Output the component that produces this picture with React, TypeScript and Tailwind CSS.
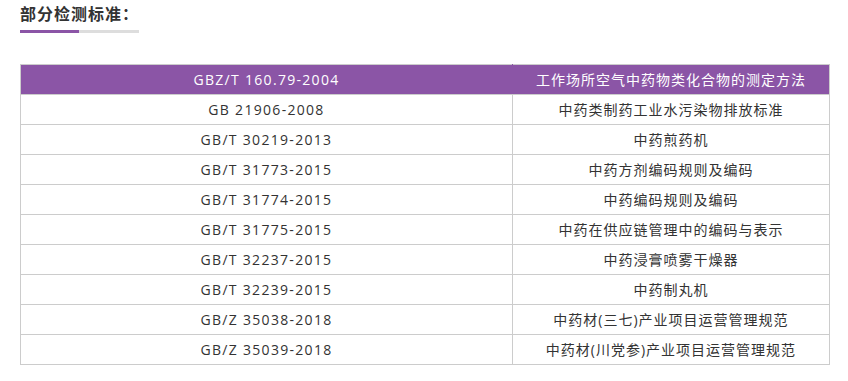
import React from "react";

const rows: [string, string][] = [
  ["GB 21906-2008", "中药类制药工业水污染物排放标准"],
  ["GB/T 30219-2013", "中药煎药机"],
  ["GB/T 31773-2015", "中药方剂编码规则及编码"],
  ["GB/T 31774-2015", "中药编码规则及编码"],
  ["GB/T 31775-2015", "中药在供应链管理中的编码与表示"],
  ["GB/T 32237-2015", "中药浸膏喷雾干燥器"],
  ["GB/T 32239-2015", "中药制丸机"],
  ["GB/Z 35038-2018", "中药材(三七)产业项目运营管理规范"],
  ["GB/Z 35039-2018", "中药材(川党参)产业项目运营管理规范"],
];

export default function App() {
  return (
    <div
      className="w-[848px] h-[381px] bg-white pl-5 pt-[3px]"
      style={{ fontFamily: '"Open Sans", "Noto Sans CJK SC", sans-serif' }}
    >
      <div className="text-[16px] leading-[22px] font-bold tracking-[1px] text-[#333]">部分检测标准：</div>
      <div className="flex mt-[5px] h-[3px] w-[119px]">
        <div className="w-[59px] bg-[#8b55a6]" />
        <div className="flex-1 bg-[#dddddd]" />
      </div>
      <table className="mt-[31px] w-[810px] border-collapse text-[14px] tracking-[1px] text-[#333]">
        <tbody>
          <tr className="bg-[#8b55a6] text-white h-[30px]">
            <td className="w-[492px] text-center tracking-[1.3px] border border-[#cccccc] border-r-[#8b55a6] p-0">GBZ/T 160.79-2004</td>
            <td className="text-center border border-[#cccccc] border-l-[#8b55a6] p-0">工作场所空气中药物类化合物的测定方法</td>
          </tr>
          {rows.map(([a, b]) => (
            <tr key={a} className="h-[30px]">
              <td className="text-center tracking-[1.3px] border border-[#cccccc] p-0">{a}</td>
              <td className="text-center border border-[#cccccc] p-0">{b}</td>
            </tr>
          ))}
        </tbody>
      </table>
    </div>
  );
}
